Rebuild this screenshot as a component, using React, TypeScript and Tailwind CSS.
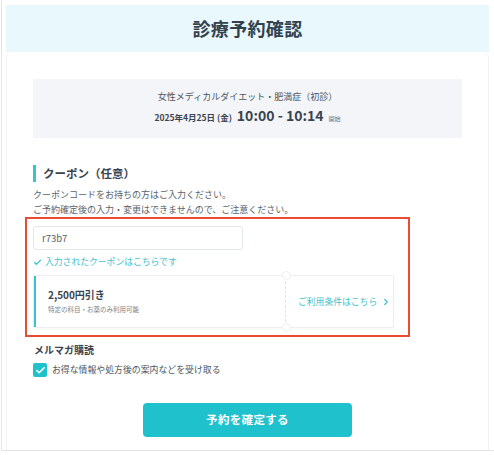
import { Check, ChevronRight } from "lucide-react";

const TEAL = "#1fc2cc";

export default function App() {
  return (
    <div className="w-[494px] h-[455px] bg-white font-['Noto_Sans_CJK_JP','Noto_Sans',sans-serif] text-[#4b5560]">
      <div className="ml-px h-[451px] border-l border-b border-[#e2e5e8] pl-[4px] pr-[5px] pt-[5px] flex flex-col">
        {/* Header */}
        <div className="h-[47px] shrink-0 bg-[#e9f8fd] flex items-center justify-center">
          <h1 className="text-[18px] font-bold tracking-[0.02em] text-[#33414d]">診療予約確認</h1>
        </div>

        {/* Card */}
        <div className="flex-1 bg-white rounded-t-md border-x border-[#f0f2f4] px-[26px] pt-[27px]">
          {/* Summary */}
          <div className="h-[59px] bg-[#f4f5f8] flex flex-col items-center justify-center gap-[2px]">
            <p className="text-[9px] leading-[14px] text-[#4b5560]">女性メディカルダイエット・肥満症（初診）</p>
            <p className="flex items-baseline gap-[5px] leading-[18px] text-[#3a4450] font-bold">
              <span className="text-[8.5px]">2025年4月25日 (金)</span>
              <span className="text-[14px]">10:00 - 10:14</span>
              <span className="text-[6px] font-normal text-[#6b7280]">開始</span>
            </p>
          </div>

          {/* Coupon */}
          <div className="mt-[27px] h-[17px] flex items-center border-l-[3px] border-[#33c6cf] pl-[7px]">
            <h2 className="text-[11.5px] font-bold text-[#3a4450]">クーポン（任意）</h2>
          </div>
          <div className="mt-[5px] text-[9px] leading-[15px] text-[#5a636d]">
            <p>クーポンコードをお持ちの方はご入力ください。</p>
            <p>ご予約確定後の入力・変更はできませんので、ご注意ください。</p>
          </div>

          <div className="-ml-[8px] w-[385px] border-2 border-[#ea4c33] pl-[6px] pt-[7px] pb-[7px]">
            <div className="w-[210px] h-[24px] border border-[#e4e7ea] rounded-[3px] flex items-center px-[8px] text-[9.5px] text-[#555e68]">
              r73b7
            </div>
            <div className="mt-[5px] h-[14px] flex items-center gap-[3px] text-[8.8px]" style={{ color: "#3fc3cc" }}>
              <Check size={9} strokeWidth={3.5} />
              <span>入力されたクーポンはこちらです</span>
            </div>

            {/* Coupon ticket */}
            <div className="relative mt-[6px] w-[361px] h-[53px] flex border border-[#eceef1] shadow-[0_1px_2px_rgba(0,0,0,0.03)]">
              <div className="flex-1 border-l-2 border-[#33c6cf] pl-[12px] flex flex-col justify-center gap-[3px]">
                <p className="text-[10px] leading-[12px] font-bold text-[#3a4450]">2,500円引き</p>
                <p className="text-[6.5px] leading-[10px] text-[#7b838c]">特定の科目・お薬のみ利用可能</p>
              </div>
              <div className="border-l border-dashed border-[#dfe2e6] my-[5px]" />
              <div className="w-[107px] pl-[12px] flex items-center gap-[4px] text-[8.8px]" style={{ color: "#3fc3cc" }}>
                <span>ご利用条件はこちら</span>
                <ChevronRight size={10} strokeWidth={3} />
              </div>
              <div className="absolute -top-[5px] left-[248px] w-[9px] h-[9px] rounded-full bg-white border border-[#eceef1]" />
              <div className="absolute -bottom-[5px] left-[248px] w-[9px] h-[9px] rounded-full bg-white border border-[#eceef1]" />
            </div>
          </div>

          {/* Mail magazine */}
          <p className="mt-[6px] text-[10px] leading-[14px] font-bold text-[#3a4450] pl-[1px]">メルマガ購読</p>
          <label className="mt-[6px] flex items-center gap-[5px]">
            <span className="w-[14px] h-[14px] rounded-[2px] flex items-center justify-center" style={{ backgroundColor: TEAL }}>
              <Check size={11} strokeWidth={3.5} className="text-white" />
            </span>
            <span className="text-[8.9px] text-[#4b5560]">お得な情報や処方後の案内などを受け取る</span>
          </label>

          <button
            className="mt-[26px] mx-auto block w-[209px] h-[34px] rounded-[4px] text-white text-[11.5px] font-bold tracking-[0.03em]"
            style={{ backgroundColor: TEAL }}
          >
            予約を確定する
          </button>
        </div>
      </div>
    </div>
  );
}
